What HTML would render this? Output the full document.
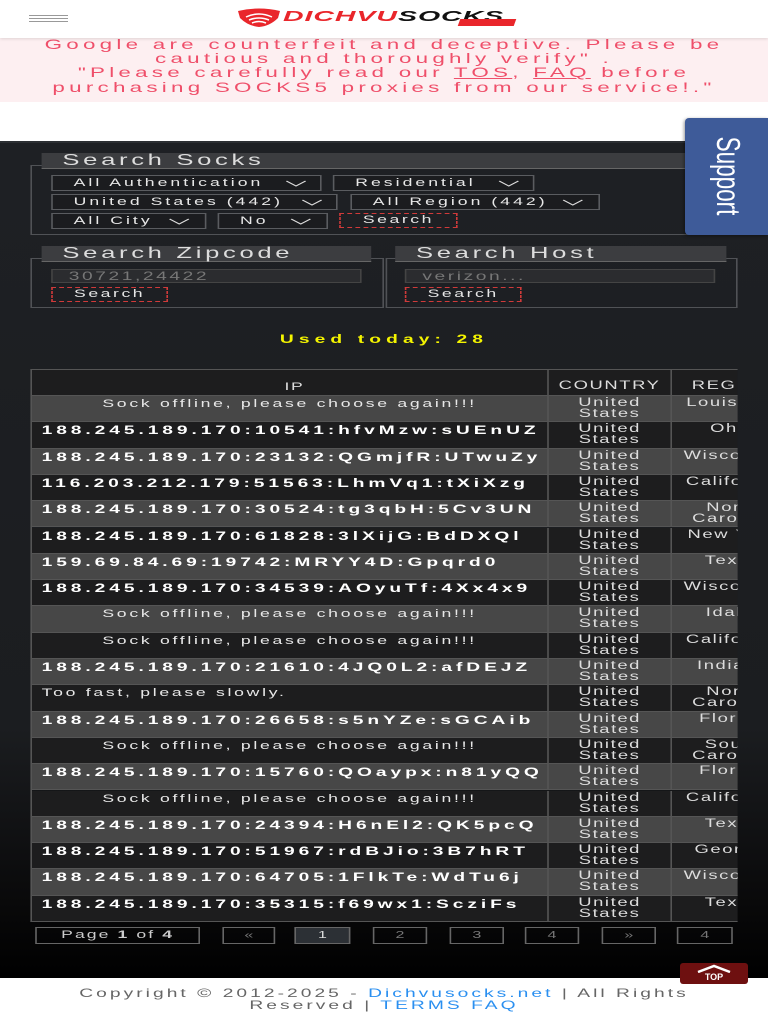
<!DOCTYPE html>
<html><head><meta charset="utf-8"><style>
*{margin:0;padding:0;box-sizing:border-box}
body{width:768px;height:1024px;overflow:hidden;position:relative;background:#fff;font-family:"Liberation Sans",sans-serif}
.abs{position:absolute}
#dark{position:absolute;left:0;top:141px;width:768px;height:837px;background:linear-gradient(#1e2024 0%,#1b1d20 70%,#0a0a0b 90%,#000 100%);border-top:2px solid #2c2f33}
#sc{position:absolute;left:0;top:0;width:480px;height:1024px;transform:scaleX(1.6);transform-origin:0 0}
.pink{position:absolute;left:0;top:38px;width:480px;height:64px;background:#fdeff1;color:#ef4f6a;font-size:14px;line-height:14.2px;letter-spacing:2.65px;text-align:center;white-space:nowrap}
.pink u{text-decoration:underline}
.leg{position:absolute;background:#3c3d40;color:#ddd;font-size:16px;letter-spacing:2.3px;line-height:16px;padding-left:13px;height:16px;border-bottom:1px solid #666}
.box{position:absolute;border:1px solid #505256}
.sel{position:absolute;height:16px;border:1px solid #5a5c60;background:#1b1c1f;color:#e8e8e8;font-size:11px;letter-spacing:1.9px;line-height:14px;padding-left:13px;white-space:nowrap}
.sel svg{position:absolute;top:4px}
.btn{position:absolute;height:15px;border:1px dashed #d03a3a;color:#e6e6e6;font-size:11px;letter-spacing:1.6px;line-height:13px;text-align:center}
.inp{position:absolute;height:14px;background:#2b2c2f;border:1px solid #444;color:#777;font-size:12px;letter-spacing:1.6px;line-height:12px;padding-left:10px}
.tw{position:absolute;left:19px;top:369px;width:442px;height:553px;overflow:hidden;border:1px solid #555;border-right:none}
.r{position:absolute;left:0;height:26.3px;width:500px;white-space:nowrap}
.r div{position:absolute;top:0;height:100%;border-right:1px solid #555;border-bottom:1px solid #555}
.c1{left:0;width:323px;font-size:12px;font-weight:bold;color:#fff;letter-spacing:2.45px;padding:2px 0 0 6px;line-height:13px}
.c1.m{font-weight:normal;text-align:center;font-size:11px;letter-spacing:1.7px;color:#e8e8e8;padding-left:0}
.c1.t{font-weight:normal;font-size:11px;letter-spacing:1.7px;color:#e8e8e8}
.c2{left:323px;width:77px;text-align:center;color:#ddd;font-size:11.5px;letter-spacing:1px;line-height:11px;padding-top:2px}
.c3{left:400px;width:77px;text-align:center;color:#ddd;font-size:11.5px;letter-spacing:1px;line-height:11px;padding-top:2px;overflow:hidden}
.L{background:#474747}.D{background:#1d1d1e}
.pg{position:absolute;top:927px;height:17px;border:1px solid #666;color:#777;font-size:10px;text-align:center;line-height:15px}
.foot{position:absolute;left:0;top:988px;width:480px;text-align:center;color:#666;font-size:12px;letter-spacing:1.9px;line-height:11.5px}
.foot a{color:#2a8ff0;text-decoration:none}
</style></head><body>
<div id="dark"></div>
<div class="abs" style="left:0;top:0;width:768px;height:38px;background:#fff;box-shadow:0 1px 3px rgba(0,0,0,.12);z-index:2"></div>
<div class="abs" style="left:29px;top:15px;width:39px;height:1px;background:#999;z-index:3;box-shadow:0 3px 0 #999,0 6px 0 #999"></div>
<svg class="abs" style="left:236px;top:8px;z-index:3" width="46" height="20" viewBox="0 0 46 20"><path d="M2 3 Q23 -2 44 3 L42 10 Q34 18 23 19 Q12 18 4 10 Z" fill="#e9262b"/><path d="M10 9 Q23 3 36 9 M13 12 Q23 8 33 12 M16 15 Q23 12 30 15" stroke="#fff" stroke-width="1.5" fill="none"/></svg>
<div class="abs" style="left:283px;top:9px;z-index:3;font-size:15px;font-weight:bold;font-style:italic;letter-spacing:0.5px;line-height:15px;transform:scaleX(1.9);transform-origin:0 0;white-space:nowrap"><span style="color:#e9262b">DICHVU</span><span style="color:#111">SOCKS</span></div>
<div class="abs" style="left:459px;top:19px;width:56px;height:7px;background:#e9262b;z-index:3;transform:skewX(-20deg)"></div>
<div id="sc">
<div class="pink"><span style="position:relative;top:-1px">Google are counterfeit and deceptive. Please be<br>cautious and thoroughly verify" .<br>"Please carefully read our <u>TOS</u>, <u>FAQ</u> before<br>purchasing SOCKS5 proxies from our service!."</span></div>

<div class="box" style="left:19px;top:165px;width:442px;height:70px"></div>
<div class="leg" style="left:26px;top:153px;width:435px">Search Socks</div>
<div class="sel" style="left:32px;top:175px;width:169px">All Authentication<svg style="left:145px" width="14" height="7"><path d="M1 1 L7 6 L13 1" stroke="#ddd" fill="none"/></svg></div>
<div class="sel" style="left:208px;top:175px;width:126px">Residential<svg style="left:102px" width="14" height="7"><path d="M1 1 L7 6 L13 1" stroke="#ddd" fill="none"/></svg></div>
<div class="sel" style="left:32px;top:194px;width:179px">United States (442)<svg style="left:155px" width="14" height="7"><path d="M1 1 L7 6 L13 1" stroke="#ddd" fill="none"/></svg></div>
<div class="sel" style="left:219px;top:194px;width:156px">All Region (442)<svg style="left:131px" width="14" height="7"><path d="M1 1 L7 6 L13 1" stroke="#ddd" fill="none"/></svg></div>
<div class="sel" style="left:32px;top:213px;width:97px">All City<svg style="left:72px" width="14" height="7"><path d="M1 1 L7 6 L13 1" stroke="#ddd" fill="none"/></svg></div>
<div class="sel" style="left:136px;top:213px;width:69px;padding-left:13px">No<svg style="left:44px" width="14" height="7"><path d="M1 1 L7 6 L13 1" stroke="#ddd" fill="none"/></svg></div>
<div class="btn" style="left:212px;top:213px;width:74px">Search</div>

<div class="box" style="left:19px;top:258px;width:221px;height:50px"></div>
<div class="leg" style="left:26px;top:246px;width:206px">Search Zipcode</div>
<div class="inp" style="left:32px;top:269px;width:194px">30721,24422</div>
<div class="btn" style="left:32px;top:287px;width:73px">Search</div>
<div class="box" style="left:241px;top:258px;width:220px;height:50px"></div>
<div class="leg" style="left:247px;top:246px;width:207px">Search Host</div>
<div class="inp" style="left:253px;top:269px;width:194px">verizon...</div>
<div class="btn" style="left:253px;top:287px;width:73px">Search</div>

<div class="abs" style="left:0;top:332px;width:480px;text-align:center;color:#f4f400;font-weight:bold;font-size:12px;letter-spacing:3.2px">Used today: 28</div>

<div class="tw">
<div class="r" style="top:0;background:#1d1d1e"><div class="c1" style="text-align:center;font-weight:normal;font-size:11px;color:#ddd;padding-top:11px;letter-spacing:1px">IP</div><div class="c2" style="padding-top:11px">COUNTRY</div><div class="c3" style="padding-top:11px">REGION</div></div>
<div class="r L" style="top:26px"><div class="c1 m">Sock offline, please choose again!!!</div><div class="c2">United<br>States</div><div class="c3">Louisiana</div></div>
<div class="r D" style="top:52.3px"><div class="c1">188.245.189.170:10541:hfvMzw:sUEnUZ</div><div class="c2">United<br>States</div><div class="c3">Ohio</div></div>
<div class="r L" style="top:78.6px"><div class="c1">188.245.189.170:23132:QGmjfR:UTwuZy</div><div class="c2">United<br>States</div><div class="c3">Wisconsin</div></div>
<div class="r D" style="top:104.9px"><div class="c1">116.203.212.179:51563:LhmVq1:tXiXzg</div><div class="c2">United<br>States</div><div class="c3">California</div></div>
<div class="r L" style="top:131.2px"><div class="c1">188.245.189.170:30524:tg3qbH:5Cv3UN</div><div class="c2">United<br>States</div><div class="c3">North<br>Carolina</div></div>
<div class="r D" style="top:157.5px"><div class="c1">188.245.189.170:61828:3lXijG:BdDXQl</div><div class="c2">United<br>States</div><div class="c3">New York</div></div>
<div class="r L" style="top:183.8px"><div class="c1">159.69.84.69:19742:MRYY4D:Gpqrd0</div><div class="c2">United<br>States</div><div class="c3">Texas</div></div>
<div class="r D" style="top:210.1px"><div class="c1">188.245.189.170:34539:AOyuTf:4Xx4x9</div><div class="c2">United<br>States</div><div class="c3">Wisconsin</div></div>
<div class="r L" style="top:236.4px"><div class="c1 m">Sock offline, please choose again!!!</div><div class="c2">United<br>States</div><div class="c3">Idaho</div></div>
<div class="r D" style="top:262.7px"><div class="c1 m">Sock offline, please choose again!!!</div><div class="c2">United<br>States</div><div class="c3">California</div></div>
<div class="r L" style="top:289px"><div class="c1">188.245.189.170:21610:4JQ0L2:afDEJZ</div><div class="c2">United<br>States</div><div class="c3">Indiana</div></div>
<div class="r D" style="top:315.3px"><div class="c1 t">Too fast, please slowly.</div><div class="c2">United<br>States</div><div class="c3">North<br>Carolina</div></div>
<div class="r L" style="top:341.6px"><div class="c1">188.245.189.170:26658:s5nYZe:sGCAib</div><div class="c2">United<br>States</div><div class="c3">Florida</div></div>
<div class="r D" style="top:367.9px"><div class="c1 m">Sock offline, please choose again!!!</div><div class="c2">United<br>States</div><div class="c3">South<br>Carolina</div></div>
<div class="r L" style="top:394.2px"><div class="c1">188.245.189.170:15760:QOaypx:n81yQQ</div><div class="c2">United<br>States</div><div class="c3">Florida</div></div>
<div class="r D" style="top:420.5px"><div class="c1 m">Sock offline, please choose again!!!</div><div class="c2">United<br>States</div><div class="c3">California</div></div>
<div class="r L" style="top:446.8px"><div class="c1">188.245.189.170:24394:H6nEl2:QK5pcQ</div><div class="c2">United<br>States</div><div class="c3">Texas</div></div>
<div class="r D" style="top:473.1px"><div class="c1">188.245.189.170:51967:rdBJio:3B7hRT</div><div class="c2">United<br>States</div><div class="c3">Georgia</div></div>
<div class="r L" style="top:499.4px"><div class="c1">188.245.189.170:64705:1FlkTe:WdTu6j</div><div class="c2">United<br>States</div><div class="c3">Wisconsin</div></div>
<div class="r D" style="top:525.7px"><div class="c1">188.245.189.170:35315:f69wx1:ScziFs</div><div class="c2">United<br>States</div><div class="c3">Texas</div></div>
</div>

<div class="pg" style="left:22px;width:103px;color:#ccc;font-size:11px;letter-spacing:1.3px">Page <b>1</b> of <b>4</b></div>
<div class="pg" style="left:139px;width:33px">«</div>
<div class="pg" style="left:184px;width:35px;background:#2c3035;color:#ddd">1</div>
<div class="pg" style="left:233px;width:34px">2</div>
<div class="pg" style="left:281px;width:34px">3</div>
<div class="pg" style="left:328px;width:34px">4</div>
<div class="pg" style="left:376px;width:34px">»</div>
<div class="pg" style="left:423px;width:35px">4</div>

<div class="foot">Copyright © 2012-2025 - <a>Dichvusocks.net</a> | All Rights<br>Reserved | <a>TERMS FAQ</a></div>
</div>
<div class="abs" style="left:685px;top:118px;width:83px;height:117px;background:#3e5b99;border-radius:4px 0 0 4px;box-shadow:-1px 1px 3px rgba(0,0,0,.4)"></div>
<div class="abs" style="left:727px;top:176px;color:#fff;font-size:30px;line-height:30px;transform:translate(-50%,-50%) rotate(90deg) scale(0.75,1.1);white-space:nowrap">Support</div>
<div class="abs" style="left:680px;top:963px;width:68px;height:21px;background:#6e1010;border-radius:3px;color:#fff;font-size:9px;font-weight:bold;text-align:center">
<svg width="40" height="9" style="display:block;margin:1px auto 0"><path d="M4 8 L20 2 L36 8" stroke="#fff" stroke-width="2.5" fill="none"/></svg><div style="line-height:9px">TOP</div></div>
</body></html>
